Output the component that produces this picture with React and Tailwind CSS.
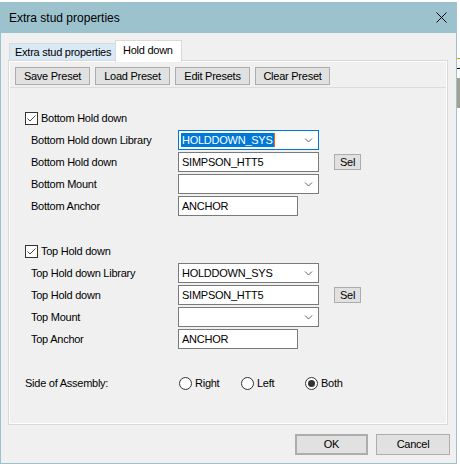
import React from "react";

const ui = "font-['Liberation_Sans',Arial,sans-serif] text-[11px] tracking-[-0.25px] text-black";

const Chevron = () => (
  <svg width="9" height="5" viewBox="0 0 9 5" className="shrink-0">
    <path d="M1 0.5 L4.5 4 L8 0.5" fill="none" stroke="#606060" strokeWidth="1" />
  </svg>
);

const Combo = ({ value, focused }) => (
  <div
    className={
      focused
        ? "flex h-[20px] w-[141px] items-center justify-between border border-[#0078d7] bg-white pl-[2px] pr-[5px]"
        : "flex h-[20px] w-[141px] items-center justify-between border border-[#7a7a7a] bg-white pl-[2px] pr-[5px]"
    }
  >
    {focused ? (
      <span className="flex h-[14px] items-center">
        <span className="bg-[#0078d7] px-[1px] leading-[14px] text-white">{value}</span>
        <span className="h-[14px] w-[1px] bg-[#f7630c]" />
      </span>
    ) : (
      <span className="pl-[1px]">{value}</span>
    )}
    <Chevron />
  </div>
);

const TextBox = ({ value, width = "w-[141px]" }) => (
  <div className={`flex h-[20px] ${width} items-center border border-[#7a7a7a] bg-white pl-[3px]`}>
    {value}
  </div>
);

const Button = ({ children, className = "" }) => (
  <div className={`flex items-center justify-center border border-[#adadad] bg-[#e1e1e1] ${className}`}>
    {children}
  </div>
);

const Checkbox = ({ label }) => (
  <div className="flex h-[13px] items-center gap-[3px] pl-[15px]">
    <div className="flex h-[13px] w-[13px] items-center justify-center border border-[#333] bg-white">
      <svg width="11" height="11" viewBox="0 0 11 11">
        <path d="M1.5 5.5 L4 8 L9.5 2.5" fill="none" stroke="#4a4a4a" strokeWidth="1" />
      </svg>
    </div>
    <span>{label}</span>
  </div>
);

const Row = ({ label, children }) => (
  <div className="grid h-[20px] grid-cols-[147px_auto] items-center pl-[21px]">
    <span>{label}</span>
    <div className="flex items-center">{children}</div>
  </div>
);

const Radio = ({ label, checked, width }) => (
  <div className={`flex items-center gap-[3px] ${width}`}>
    <div className="flex h-[13px] w-[13px] items-center justify-center rounded-full border border-[#333] bg-white">
      {checked && <div className="h-[7px] w-[7px] rounded-full bg-[#333]" />}
    </div>
    <span>{label}</span>
  </div>
);

const HoldDownGroup = ({ side, focused }) => (
  <div className="flex flex-col">
    <Checkbox label={`${side} Hold down`} />
    <div className="mt-[5px] flex flex-col gap-[2px]">
      <Row label={`${side} Hold down Library`}>
        <Combo value="HOLDDOWN_SYS" focused={focused} />
      </Row>
      <Row label={`${side} Hold down`}>
        <TextBox value="SIMPSON_HTT5" />
        <Button className="ml-[15px] h-[16px] w-[27px]">Sel</Button>
      </Row>
      <Row label={`${side} Mount`}>
        <Combo value="" />
      </Row>
      <Row label={`${side} Anchor`}>
        <TextBox value="ANCHOR" width="w-[120px]" />
      </Row>
    </div>
  </div>
);

export default function App() {
  return (
    <div className={`flex h-[466px] w-[460px] bg-white pt-[2px] ${ui}`}>
      {/* dialog window */}
      <div className="flex h-[462px] w-[457px] flex-col border-x border-b border-[#9cc2ce] bg-[#f0f0f0]">
        <div className="flex h-[31px] shrink-0 items-center justify-between bg-[#9cc2ce] pl-[8px] pr-[9px]">
          <span className="text-[12px] tracking-normal">Extra stud properties</span>
          <svg width="11" height="11" viewBox="0 0 11 11">
            <path d="M0.5 0.5 L10.5 10.5 M10.5 0.5 L0.5 10.5" stroke="#000" strokeWidth="1" />
          </svg>
        </div>

        <div className="flex flex-col px-[7px] pt-[7px]">
          {/* tabs */}
          <div className="flex h-[20px] items-end pl-[1px]">
            <div className="flex h-[17px] w-[107px] items-center border-x border-t border-[#d9d9d9] bg-[#dae9f6] pl-[5px]">
              Extra stud properties
            </div>
            <div className="relative z-10 -mb-[2px] -ml-[1px] flex h-[22px] w-[67px] items-center border-x border-t border-[#d9d9d9] bg-white pl-[7px] pb-[2px]">
              Hold down
            </div>
          </div>

          {/* tab page */}
          <div className="h-[365px] w-[440px] border border-[#d9d9d9]">
            <div className="flex h-full flex-col border border-white">
              <div className="flex gap-[5px] pl-[5px] pt-[5px]">
                <Button className="h-[18px] w-[75px]">Save Preset</Button>
                <Button className="h-[18px] w-[75px]">Load Preset</Button>
                <Button className="h-[18px] w-[75px]">Edit Presets</Button>
                <Button className="h-[18px] w-[75px]">Clear Preset</Button>
              </div>
              <div className="mt-[2px] h-[1px] bg-[#dcdcdc]" />

              <div className="mt-[24px]">
                <HoldDownGroup side="Bottom" focused />
              </div>
              <div className="mt-[29px]">
                <HoldDownGroup side="Top" />
              </div>

              <div className="mt-[28px] flex h-[13px] items-center pl-[15px]">
                <span className="w-[154px]">Side of Assembly:</span>
                <Radio label="Right" width="w-[62px]" />
                <Radio label="Left" width="w-[64px]" />
                <Radio label="Both" checked />
              </div>
            </div>
          </div>
        </div>

        <div className="mt-[9px] flex justify-end gap-[8px] pr-[6px]">
          <Button className="h-[21px] w-[73px] border-2 border-[#0078d7]">OK</Button>
          <Button className="h-[21px] w-[74px]">Cancel</Button>
        </div>
      </div>

      {/* sliver of whatever sits behind the dialog */}
      <div className="flex w-[3px] flex-col">
        <div className="mt-[56px] h-[1px] bg-[#c8a400]" />
        <div className="mt-[9px] h-[1px] bg-black" />
        <div className="mt-[9px] h-[30px] bg-[#a49f93]" />
      </div>
    </div>
  );
}
